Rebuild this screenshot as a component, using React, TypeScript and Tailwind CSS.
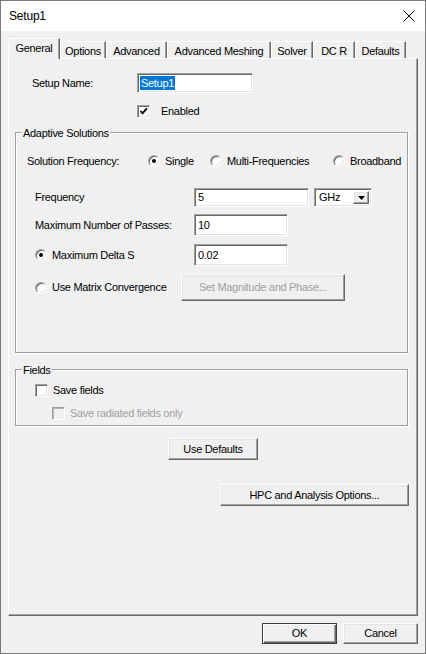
import React from 'react';

// classic 3D edges
const sunken =
  'bg-white border border-t-[#a0a0a0] border-l-[#a0a0a0] border-b-white border-r-white shadow-[inset_1px_1px_0_#696969,inset_-1px_-1px_0_#e3e3e3]';
const raised =
  'bg-[#f0f0f0] border border-t-white border-l-white border-b-[#696969] border-r-[#696969] shadow-[inset_-1px_-1px_0_#a0a0a0,inset_1px_1px_0_#e3e3e3]';

const tabs = [
  { label: 'General', w: 'w-[52px]', active: true },
  { label: 'Options', w: 'w-[46px]' },
  { label: 'Advanced', w: 'w-[61px]' },
  { label: 'Advanced Meshing', w: 'w-[104px]' },
  { label: 'Solver', w: 'w-[42px]' },
  { label: 'DC R', w: 'w-[42px]' },
  { label: 'Defaults', w: 'w-[51px]' },
];

const Radio: React.FC<{ checked?: boolean }> = ({ checked }) => (
  <span className={`w-[12px] h-[12px] rounded-full flex items-center justify-center shrink-0 ${sunken}`}>
    {checked && <span className="w-[4px] h-[4px] rounded-full bg-black" />}
  </span>
);

const Checkbox: React.FC<{ checked?: boolean; disabled?: boolean }> = ({ checked, disabled }) => (
  <span
    className={`w-[13px] h-[13px] flex items-center justify-center shrink-0 ${
      disabled
        ? 'bg-[#f0f0f0] border border-t-[#a0a0a0] border-l-[#a0a0a0] border-b-white border-r-white shadow-[inset_1px_1px_0_#b4b4b4]'
        : sunken
    }`}
  >
    {checked && (
      <svg width="9" height="9" viewBox="0 0 9 9">
        <polyline points="1.5,4 3.5,6.3 7.8,1.5" fill="none" stroke="#000" strokeWidth="1.9" />
      </svg>
    )}
  </span>
);

const Button: React.FC<{ className?: string; disabled?: boolean; children: React.ReactNode }> = ({
  className = '',
  disabled,
  children,
}) => (
  <div className={`flex items-center justify-center ${raised} ${disabled ? 'text-[#a0a0a0]' : ''} ${className}`}>
    {children}
  </div>
);

const GroupBox: React.FC<{ title: string; className?: string; children: React.ReactNode }> = ({
  title,
  className = '',
  children,
}) => (
  <div
    className={`relative flex flex-col border border-[#a0a0a0] shadow-[inset_1px_1px_0_#fff,1px_1px_0_#fff] ${className}`}
  >
    <span className="absolute -top-[6px] left-[6px] px-[1px] bg-[#f0f0f0]">{title}</span>
    {children}
  </div>
);

export default function App() {
  return (
    <div className="w-[426px] h-[654px] border border-[#7a7a7a] bg-[#f0f0f0] flex flex-col text-black text-[11px] leading-[13px] tracking-[-0.3px] [font-family:'Liberation_Sans',Arial,sans-serif]">
      {/* title bar */}
      <div className="h-[30px] bg-white flex items-center justify-between pl-[8px] pr-[10px] shrink-0">
        <span className="text-[12px] tracking-[-0.2px]">Setup1</span>
        <svg width="12" height="12" viewBox="0 0 12 12">
          <path d="M0.5 0.5 L11.5 11.5 M11.5 0.5 L0.5 11.5" stroke="#000" strokeWidth="1" />
        </svg>
      </div>

      <div className="flex-1 flex flex-col px-[7px]">
        {/* tab strip */}
        <div className="mt-[7px] h-[20px] flex items-end">
          {tabs.map((t) =>
            t.active ? (
              <div
                key={t.label}
                className={`${t.w} h-[21px] -mb-px relative z-10 bg-[#f0f0f0] flex justify-center pt-[3px] border-l border-t border-r border-l-white border-t-white border-r-[#696969] shadow-[inset_-1px_0_0_#a0a0a0]`}
              >
                {t.label}
              </div>
            ) : (
              <div
                key={t.label}
                className={`${t.w} h-[17px] flex justify-center pt-[3px] border-l border-t border-r border-l-white border-t-white border-r-[#696969] shadow-[inset_-1px_0_0_#a0a0a0]`}
              >
                {t.label}
              </div>
            )
          )}
        </div>

        {/* tab page */}
        <div className="h-[558px] flex flex-col border border-t-white border-l-white border-b-[#696969] border-r-[#696969] shadow-[inset_-1px_-1px_0_#a0a0a0]">
          <div className="mt-[14px] h-[20px] flex items-center">
            <span className="pl-[23px] w-[128px]">Setup Name:</span>
            <div className={`w-[116px] h-[20px] flex items-center pl-[2px] ${sunken}`}>
              <span className="bg-[#0078d7] text-white px-[1px] leading-[14px]">Setup1</span>
            </div>
          </div>

          <div className="mt-[12px] h-[13px] flex items-center pl-[128px]">
            <Checkbox checked />
            <span className="ml-[11px]">Enabled</span>
          </div>

          <GroupBox title="Adaptive Solutions" className="mt-[14px] ml-[6px] w-[393px] h-[221px]">
            <div className="mt-[20px] h-[16px] flex items-center">
              <span className="pl-[11px] w-[132px]">Solution Frequency:</span>
              <div className="w-[62px] flex items-center">
                <Radio checked />
                <span className="ml-[5px]">Single</span>
              </div>
              <div className="w-[123px] flex items-center">
                <Radio />
                <span className="ml-[5px]">Multi-Frequencies</span>
              </div>
              <div className="flex items-center">
                <Radio />
                <span className="ml-[5px]">Broadband</span>
              </div>
            </div>

            <div className="mt-[19px] h-[19px] flex items-center">
              <span className="pl-[19px] w-[178px]">Frequency</span>
              <div className={`w-[115px] h-[19px] flex items-center pl-[3px] ${sunken}`}>5</div>
              <div className={`ml-[5px] w-[58px] h-[19px] flex items-center p-[2px] ${sunken}`}>
                <span className="flex-1 pl-[2px]">GHz</span>
                <div className={`w-[16px] h-full flex items-center justify-center ${raised}`}>
                  <svg width="7" height="4" viewBox="0 0 7 4">
                    <polygon points="0,0 7,0 3.5,4" fill="#000" />
                  </svg>
                </div>
              </div>
            </div>

            <div className="mt-[7px] h-[22px] flex items-center">
              <span className="pl-[19px] w-[178px]">Maximum Number of Passes:</span>
              <div className={`w-[94px] h-[22px] flex items-center pl-[3px] ${sunken}`}>10</div>
            </div>

            <div className="mt-[8px] h-[22px] flex items-center">
              <div className="pl-[19px] w-[178px] flex items-center">
                <Radio checked />
                <span className="ml-[5px]">Maximum Delta S</span>
              </div>
              <div className={`w-[94px] h-[22px] flex items-center pl-[3px] ${sunken}`}>0.02</div>
            </div>

            <div className="mt-[8px] h-[27px] flex items-center">
              <div className="pl-[19px] w-[165px] flex items-center">
                <Radio />
                <span className="ml-[5px]">Use Matrix Convergence</span>
              </div>
              <Button disabled className="w-[164px] h-[27px]">
                Set Magnitude and Phase...
              </Button>
            </div>
          </GroupBox>

          <GroupBox title="Fields" className="mt-[16px] ml-[6px] w-[393px] h-[57px]">
            <div className="mt-[14px] h-[13px] flex items-center pl-[19px]">
              <Checkbox />
              <span className="ml-[5px]">Save fields</span>
            </div>
            <div className="mt-[10px] h-[13px] flex items-center pl-[36px]">
              <Checkbox disabled />
              <span className="ml-[5px] text-[#a0a0a0]">Save radiated fields only</span>
            </div>
          </GroupBox>

          <Button className="mt-[12px] self-center w-[90px] h-[22px]">Use Defaults</Button>
          <Button className="mt-[24px] ml-[211px] w-[189px] h-[22px]">HPC and Analysis Options...</Button>
        </div>

        {/* dialog buttons */}
        <div className="mt-[7px] flex justify-end gap-[6px]">
          <div className="w-[75px] h-[21px] flex items-center justify-center bg-[#f0f0f0] border border-[#3c3c3c] shadow-[inset_1px_1px_0_#fff,inset_-1px_-1px_0_#696969,inset_-2px_-2px_0_#a0a0a0]">
            OK
          </div>
          <Button className="w-[75px] h-[21px]">Cancel</Button>
        </div>
      </div>
    </div>
  );
}
